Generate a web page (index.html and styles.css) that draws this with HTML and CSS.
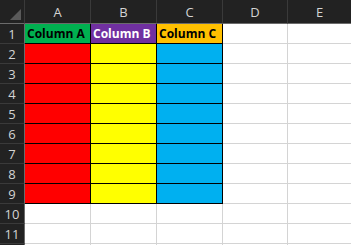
FILE: index.html
```html
<!DOCTYPE html>
<html lang="en">
<head>
    <meta charset="UTF-8">
    <title>Sheet1</title>
    <link rel="stylesheet" href="styles.css">
</head>
<body>
    <div class="sheet">
        <div class="corner"><span class="corner-mark"></span></div>
        <div class="col-head">A</div>
        <div class="col-head">B</div>
        <div class="col-head">C</div>
        <div class="col-head">D</div>
        <div class="col-head">E</div>

        <div class="row-head">1</div>
        <div class="cell title green">Column A</div>
        <div class="cell title purple">Column B</div>
        <div class="cell title orange">Column C</div>
        <div class="cell"></div>
        <div class="cell"></div>

        <div class="row-head">2</div>
        <div class="cell fill red"></div>
        <div class="cell fill yellow"></div>
        <div class="cell fill blue"></div>
        <div class="cell"></div>
        <div class="cell"></div>

        <div class="row-head">3</div>
        <div class="cell fill red"></div>
        <div class="cell fill yellow"></div>
        <div class="cell fill blue"></div>
        <div class="cell"></div>
        <div class="cell"></div>

        <div class="row-head">4</div>
        <div class="cell fill red"></div>
        <div class="cell fill yellow"></div>
        <div class="cell fill blue"></div>
        <div class="cell"></div>
        <div class="cell"></div>

        <div class="row-head">5</div>
        <div class="cell fill red"></div>
        <div class="cell fill yellow"></div>
        <div class="cell fill blue"></div>
        <div class="cell"></div>
        <div class="cell"></div>

        <div class="row-head">6</div>
        <div class="cell fill red"></div>
        <div class="cell fill yellow"></div>
        <div class="cell fill blue"></div>
        <div class="cell"></div>
        <div class="cell"></div>

        <div class="row-head">7</div>
        <div class="cell fill red"></div>
        <div class="cell fill yellow"></div>
        <div class="cell fill blue"></div>
        <div class="cell"></div>
        <div class="cell"></div>

        <div class="row-head">8</div>
        <div class="cell fill red"></div>
        <div class="cell fill yellow"></div>
        <div class="cell fill blue"></div>
        <div class="cell"></div>
        <div class="cell"></div>

        <div class="row-head">9</div>
        <div class="cell fill red"></div>
        <div class="cell fill yellow"></div>
        <div class="cell fill blue"></div>
        <div class="cell"></div>
        <div class="cell"></div>

        <div class="row-head">10</div>
        <div class="cell"></div>
        <div class="cell"></div>
        <div class="cell"></div>
        <div class="cell"></div>
        <div class="cell"></div>

        <div class="row-head">11</div>
        <div class="cell"></div>
        <div class="cell"></div>
        <div class="cell"></div>
        <div class="cell"></div>
        <div class="cell"></div>

        <div class="row-head"></div>
        <div class="cell"></div>
        <div class="cell"></div>
        <div class="cell"></div>
        <div class="cell"></div>
        <div class="cell"></div>
    </div>
</body>
</html>
```
FILE: styles.css
```css
/* シート全体 */
body {
    margin: 0;
    padding: 0;
    background-color: #ffffff;
    font-family: "Open Sans", "Noto Sans", sans-serif;
    overflow: hidden;
}
.sheet {
    display: grid;
    grid-template-columns: 25px 66px 66px 66px 65px 64px;
    grid-template-rows: 24px;
    grid-auto-rows: 20px;
}
.sheet > div {
    box-sizing: border-box;
}
.corner {
    background-color: #222222;
    border-right: 1px solid #3a3a3a;
    border-bottom: 1px solid #6b6b6b;
    display: flex;
    justify-content: flex-end;
    align-items: flex-end;
    padding: 0 3px 3px 0;
}
.corner-mark {
    width: 0;
    height: 0;
    border-left: 11px solid transparent;
    border-bottom: 11px solid #5a5a5a;
}
.col-head {
    background-color: #222222;
    color: #d4d4d4;
    font-size: 13px;
    border-right: 1px solid #3a3a3a;
    border-bottom: 1px solid #6b6b6b;
    display: flex;
    align-items: center;
    justify-content: center;
    padding-top: 1px;
}
.row-head {
    background-color: #222222;
    color: #d4d4d4;
    font-size: 13px;
    border-right: 1px solid #6b6b6b;
    border-bottom: 1px solid #3a3a3a;
    display: flex;
    align-items: center;
    justify-content: center;
}
.cell {
    border-right: 1px solid #d4d4d4;
    border-bottom: 1px solid #d4d4d4;
}
.title {
    font-weight: 700;
    font-size: 12px;
    display: flex;
    align-items: center;
    padding-left: 2px;
    white-space: nowrap;
    overflow: hidden;
    border-right-color: #000000;
    border-bottom-color: #000000;
}
.fill {
    border-right-color: #000000;
    border-bottom-color: #000000;
}
.green { background-color: #00b050; color: #000000; }
.purple { background-color: #7030a0; color: #ffffff; }
.orange { background-color: #ffc000; color: #000000; }
.red { background-color: #ff0000; }
.yellow { background-color: #ffff00; }
.blue { background-color: #00b0f0; }
```
